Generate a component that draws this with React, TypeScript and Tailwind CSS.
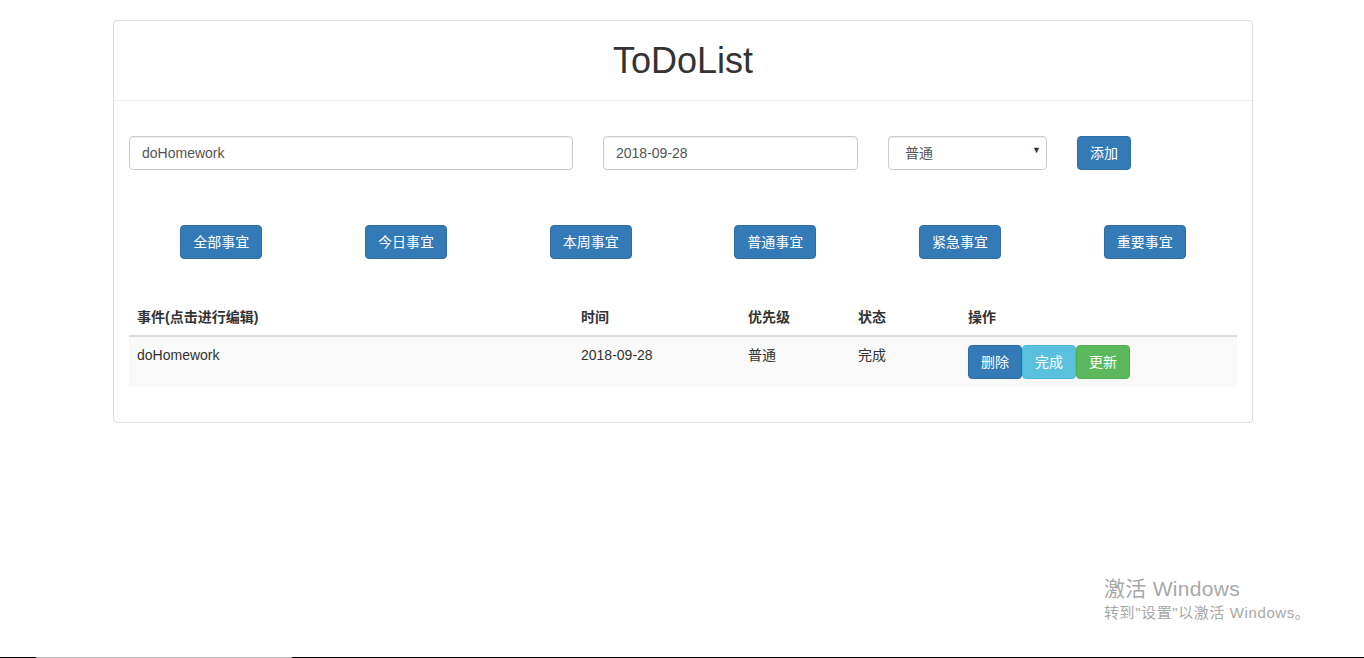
import { useState } from "react";

const font = "font-['Liberation_Sans','Noto_Sans_CJK_SC',sans-serif]";

const filters = ["全部事宜", "今日事宜", "本周事宜", "普通事宜", "紧急事宜", "重要事宜"];

const App = () => {
  const [title, setTitle] = useState("doHomework");
  const [date, setDate] = useState("2018-09-28");
  const [level, setLevel] = useState("普通");

  return (
    <div className={`relative flex h-[658px] flex-col bg-white text-[14px] text-[#333] ${font}`}>
      <div className="flex-1 pt-5">
        {/* Panel */}
        <div className="ml-[113px] w-[1140px] rounded border border-[#ddd] bg-white">
          <div className="flex h-[80px] items-center justify-center border-b border-[#eee]">
            <h1 className="text-[36px] leading-none text-[#333]">ToDoList</h1>
          </div>

          <div className="px-[15px] pt-[35px] pb-[35px]">
            {/* Add form */}
            <div className="flex items-center">
              <input
                value={title}
                onChange={(e) => setTitle(e.target.value)}
                className="h-[34px] w-[444px] rounded border border-[#ccc] px-3 text-[#555] shadow-[inset_0_1px_1px_rgba(0,0,0,0.075)] outline-none"
              />
              <input
                value={date}
                onChange={(e) => setDate(e.target.value)}
                className="ml-[30px] h-[34px] w-[255px] rounded border border-[#ccc] px-3 text-[#555] shadow-[inset_0_1px_1px_rgba(0,0,0,0.075)] outline-none"
              />
              <div className="relative ml-[30px] h-[34px] w-[159px]">
                <select
                  value={level}
                  onChange={(e) => setLevel(e.target.value)}
                  className="h-full w-full appearance-none rounded border border-[#ccc] bg-white pl-4 text-[#555] shadow-[inset_0_1px_1px_rgba(0,0,0,0.075)] outline-none"
                >
                  <option>普通</option>
                  <option>紧急</option>
                  <option>重要</option>
                </select>
                <span className="pointer-events-none absolute top-[8px] right-[6px] text-[9px] text-[#333]">▼</span>
              </div>
              <button className="ml-[30px] h-[34px] w-[54px] rounded border border-[#2e6da4] bg-[#337ab7] text-white">
                添加
              </button>
            </div>

            {/* Filters */}
            <div className="mt-[55px] grid grid-cols-6">
              {filters.map((f) => (
                <div key={f} className="flex justify-center">
                  <button className="h-[34px] w-[82px] rounded border border-[#2e6da4] bg-[#337ab7] text-white">
                    {f}
                  </button>
                </div>
              ))}
            </div>

            {/* Table */}
            <table className="mt-[40px] w-full border-collapse">
              <thead>
                <tr className="border-b-2 border-[#ddd] text-left font-bold">
                  <th className="w-[444px] p-2 leading-5">事件(点击进行编辑)</th>
                  <th className="w-[167px] p-2 leading-5">时间</th>
                  <th className="w-[110px] p-2 leading-5">优先级</th>
                  <th className="w-[110px] p-2 leading-5">状态</th>
                  <th className="p-2 leading-5">操作</th>
                </tr>
              </thead>
              <tbody>
                <tr className="bg-[#f9f9f9] align-top">
                  <td className="p-2 leading-5">doHomework</td>
                  <td className="p-2 leading-5">2018-09-28</td>
                  <td className="p-2 leading-5">普通</td>
                  <td className="p-2 leading-5">完成</td>
                  <td className="p-2 leading-5">
                    <div className="flex">
                      <button className="h-[34px] w-[54px] rounded border border-[#2e6da4] bg-[#337ab7] text-white">删除</button>
                      <button className="h-[34px] w-[54px] rounded border border-[#46b8da] bg-[#5bc0de] text-white">完成</button>
                      <button className="h-[34px] w-[54px] rounded border border-[#4cae4c] bg-[#5cb85c] text-white">更新</button>
                    </div>
                  </td>
                </tr>
              </tbody>
            </table>
          </div>
        </div>
      </div>

      {/* taskbar edge */}
      <div className="flex h-px">
        <div className="w-[36px] bg-black" />
        <div className="w-[256px] bg-[#bbb]" />
        <div className="flex-1 bg-black" />
      </div>

      {/* Windows watermark */}
      <div className="pointer-events-none absolute top-[575px] left-[1104px] text-[#a8a8a8]">
        <div className="text-[21px] leading-7 tracking-[0.3px]">激活 Windows</div>
        <div className="text-[15px] leading-5 tracking-[0.6px]">转到"设置"以激活 Windows。</div>
      </div>
    </div>
  );
};

export default App;
